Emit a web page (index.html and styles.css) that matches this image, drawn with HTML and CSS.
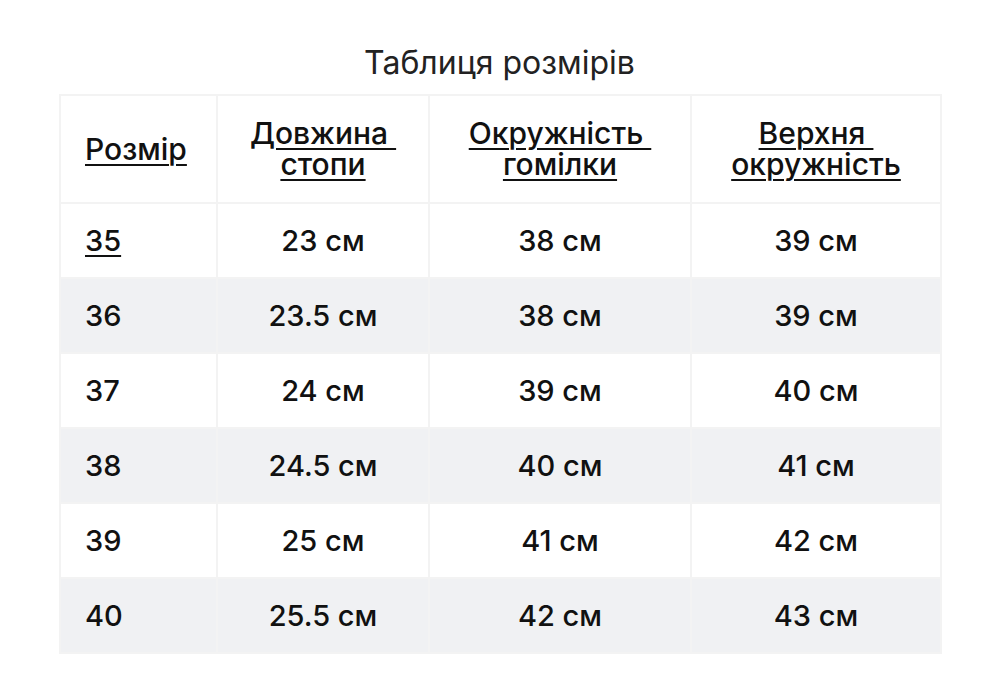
FILE: index.html
```html
<!DOCTYPE html>
<html lang="uk">
<head>
<meta charset="utf-8">
<link rel="stylesheet" href="styles.css">
</head>
<body>
<div class="page">
  <h1 class="title">Таблиця розмірів</h1>
  <table class="sizes">
    <colgroup>
      <col class="c1"><col class="c2"><col class="c3"><col class="c4">
    </colgroup>
    <thead>
      <tr>
        <th class="first"><u>Розмір</u></th>
        <th><u>Довжина&nbsp;<br>стопи</u></th>
        <th><u>Окружність&nbsp;<br>гомілки</u></th>
        <th><u>Верхня&nbsp;<br>окружність</u></th>
      </tr>
    </thead>
    <tbody>
      <tr><td class="first"><u>35</u></td><td>23 см</td><td>38 см</td><td>39 см</td></tr>
      <tr class="alt"><td class="first">36</td><td>23.5 см</td><td>38 см</td><td>39 см</td></tr>
      <tr><td class="first">37</td><td>24 см</td><td>39 см</td><td>40 см</td></tr>
      <tr class="alt"><td class="first">38</td><td>24.5 см</td><td>40 см</td><td>41 см</td></tr>
      <tr><td class="first">39</td><td>25 см</td><td>41 см</td><td>42 см</td></tr>
      <tr class="alt"><td class="first">40</td><td>25.5 см</td><td>42 см</td><td>43 см</td></tr>
    </tbody>
  </table>
</div>
</body>
</html>
```
FILE: styles.css
```css
html, body {
  margin: 0;
  padding: 0;
  background: #ffffff;
}
body {
  font-family: "Inter", "Lato", sans-serif;
  color: #111111;
}
.page {
  padding-top: 43px;
  padding-left: 59px;
}
.title {
  margin: 0;
  width: 881px;
  text-align: center;
  font-size: 32px;
  font-weight: 400;
  line-height: 40px;
  color: #222222;
  height: 51px;
}
.sizes {
  border-collapse: collapse;
  width: 881px;
  table-layout: fixed;
}
.c1 { width: 157px; }
.c2 { width: 212px; }
.c3 { width: 262px; }
.c4 { width: 250px; }
.sizes th, .sizes td {
  border: 2px solid #f3f3f3;
  text-align: center;
  padding: 0;
  font-size: 29px;
  font-weight: 500;
  color: #111111;
}
.sizes th {
  height: 106px;
  line-height: 31px;
  font-size: 30px;
}
.sizes td {
  height: 73px;
}
.sizes .first {
  text-align: left;
  padding-left: 24px;
}
.sizes u {
  text-decoration-thickness: 2px;
  text-underline-offset: 4px;
}
.alt td {
  background: #f0f1f3;
}
```
